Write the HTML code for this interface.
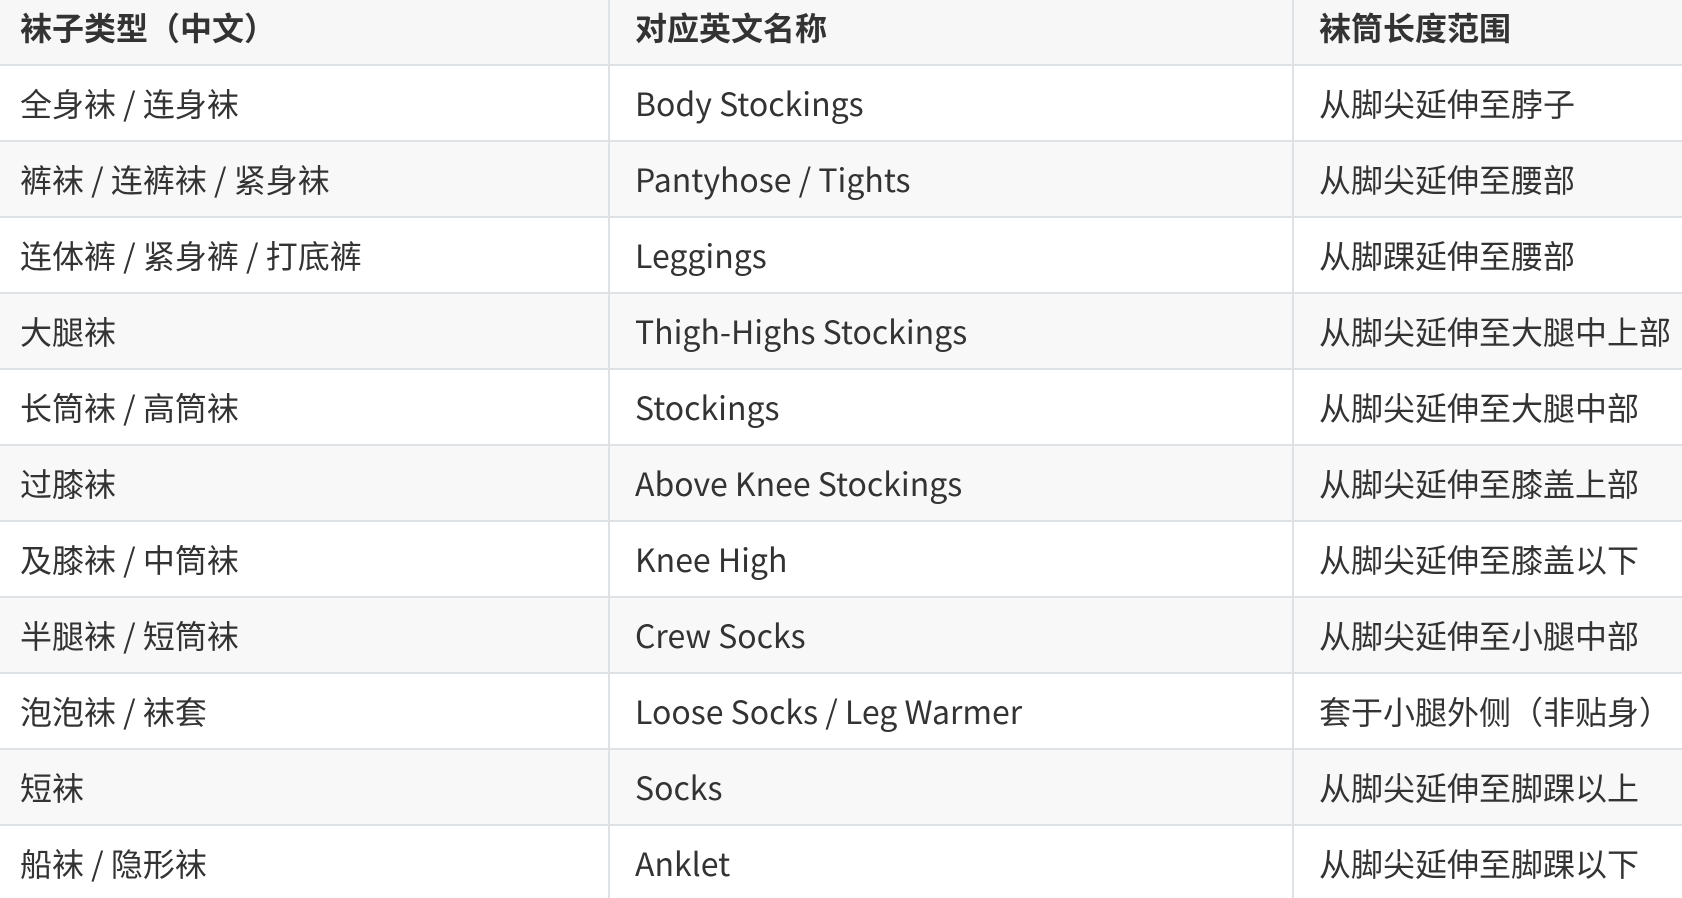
<!DOCTYPE html>
<html><head><meta charset="utf-8"><style>
html,body{margin:0;padding:0;width:1682px;height:898px;overflow:hidden;background:#fff}
.t{font-family:"Noto Sans CJK SC",sans-serif;font-size:32px;color:#333}
.r{display:flex;height:74px;border-bottom:2px solid #dfe2e5;width:1720px;background:#fff}
.r:nth-child(odd){background:#f8f8f8}
.r.h{height:64px;background:#f7f7f7;font-weight:bold}
.c{box-sizing:border-box;white-space:nowrap;overflow:hidden;display:flex;align-items:center;padding-left:25px}
.h .c{padding-bottom:10px}
.c1{width:608px;padding-left:20px}
.c2{width:684px;border-left:2px solid #dfe2e5}
.c3{width:428px;border-left:2px solid #dfe2e5}
</style></head><body><div class="t">
<div class="r h"><div class="c c1">袜子类型（中文）</div><div class="c c2">对应英文名称</div><div class="c c3">袜筒长度范围</div></div>
<div class="r"><div class="c c1">全身袜 / 连身袜</div><div class="c c2">Body Stockings</div><div class="c c3">从脚尖延伸至脖子</div></div>
<div class="r"><div class="c c1">裤袜 / 连裤袜 / 紧身袜</div><div class="c c2">Pantyhose / Tights</div><div class="c c3">从脚尖延伸至腰部</div></div>
<div class="r"><div class="c c1">连体裤 / 紧身裤 / 打底裤</div><div class="c c2">Leggings</div><div class="c c3">从脚踝延伸至腰部</div></div>
<div class="r"><div class="c c1">大腿袜</div><div class="c c2">Thigh-Highs Stockings</div><div class="c c3">从脚尖延伸至大腿中上部</div></div>
<div class="r"><div class="c c1">长筒袜 / 高筒袜</div><div class="c c2">Stockings</div><div class="c c3">从脚尖延伸至大腿中部</div></div>
<div class="r"><div class="c c1">过膝袜</div><div class="c c2">Above Knee Stockings</div><div class="c c3">从脚尖延伸至膝盖上部</div></div>
<div class="r"><div class="c c1">及膝袜 / 中筒袜</div><div class="c c2">Knee High</div><div class="c c3">从脚尖延伸至膝盖以下</div></div>
<div class="r"><div class="c c1">半腿袜 / 短筒袜</div><div class="c c2">Crew Socks</div><div class="c c3">从脚尖延伸至小腿中部</div></div>
<div class="r"><div class="c c1">泡泡袜 / 袜套</div><div class="c c2">Loose Socks / Leg Warmer</div><div class="c c3">套于小腿外侧（非贴身）</div></div>
<div class="r"><div class="c c1">短袜</div><div class="c c2">Socks</div><div class="c c3">从脚尖延伸至脚踝以上</div></div>
<div class="r"><div class="c c1">船袜 / 隐形袜</div><div class="c c2">Anklet</div><div class="c c3">从脚尖延伸至脚踝以下</div></div>
</div></body></html>
